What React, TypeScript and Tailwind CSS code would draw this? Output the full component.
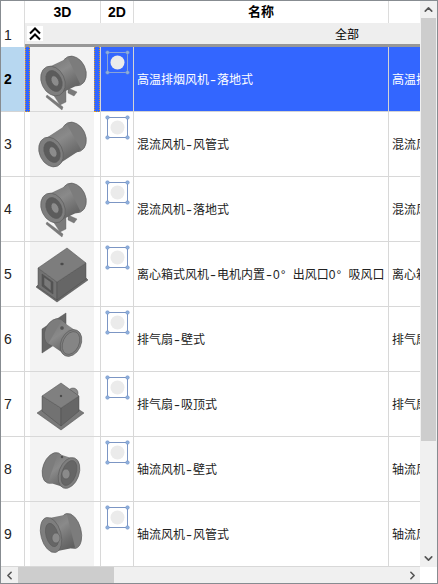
import React from "react";
import { ChevronUp, ChevronDown, ChevronLeft, ChevronRight } from "lucide-react";

const cjk = "font-['Liberation_Sans','Noto_Sans_CJK_SC',sans-serif]";

interface CylProps {
    id: string;
    fx: number;
    fy: number;
    bx: number;
    by: number;
    rx?: number;
    ry?: number;
    rot?: number;
    children?: React.ReactNode;
}

// tilted drum: rear flange, shaded body, front flange
const Cyl: React.FC<CylProps> = ({ id, fx, fy, bx, by, rx = 10, ry = 14, rot = -25, children }) => {
    const a = (rot * Math.PI) / 180;
    const ax = bx - fx;
    const ay = by - fy;
    const ux = ax * Math.cos(a) + ay * Math.sin(a);
    const uy = -ax * Math.sin(a) + ay * Math.cos(a);
    const t = Math.atan2(-ry * ux, rx * uy);
    const lx = rx * Math.cos(t);
    const ly = ry * Math.sin(t);
    const dx = lx * Math.cos(a) - ly * Math.sin(a);
    const dy = lx * Math.sin(a) + ly * Math.cos(a);
    return (
        <g stroke="#5a5a5a" strokeWidth="0.6">
            <ellipse
                cx={bx}
                cy={by}
                rx={rx + 1}
                ry={ry + 1}
                transform={`rotate(${rot} ${bx} ${by})`}
                fill="#7c7c7c"
            />
            <polygon
                points={`${fx + dx},${fy + dy} ${bx + dx},${by + dy} ${bx - dx},${by - dy} ${fx - dx},${fy - dy}`}
                fill={`url(#${id})`}
                stroke="none"
            />
            <ellipse
                cx={fx}
                cy={fy}
                rx={rx + 1}
                ry={ry + 1}
                transform={`rotate(${rot} ${fx} ${fy})`}
                fill="#7e7e7e"
            />
            {children}
        </g>
    );
};

const Grad: React.FC<{ id: string }> = ({ id }) => (
    <defs>
        <linearGradient id={id} x1="0.15" y1="0" x2="0.75" y2="1">
            <stop offset="0" stopColor="#777" />
            <stop offset="0.4" stopColor="#8a8a8a" />
            <stop offset="0.75" stopColor="#6e6e6e" />
            <stop offset="1" stopColor="#5e5e5e" />
        </linearGradient>
    </defs>
);

const Duct: React.FC<{ id: string; dy?: number; feet?: boolean }> = ({ id, dy = 0, feet }) => {
    const cx = feet ? 23 : 21;
    const cy = feet ? 31 : 40;
    return (
        <svg width="64" height="64" viewBox="0 0 64 64" className="block">
            <Grad id={id} />
            <g transform={`translate(0 ${dy})`}>
                {feet && (
                    <g fill="#7a7a7a" stroke="#666" strokeWidth="0.4">
                        <polygon points="38,38 47,42 44,46 38,43" />
                        <polygon points="21,41 36,36 36,52 30,55" />
                        <polygon points="17,45 33,57 32,60 16,47" />
                    </g>
                )}
                <Cyl id={id} fx={cx} fy={cy} bx={44} by={feet ? 21 : 25} rx={10.5} ry={14.5}>
                    <ellipse
                        cx={cx + 1}
                        cy={cy}
                        rx="7.5"
                        ry="11"
                        transform={`rotate(-25 ${cx + 1} ${cy})`}
                        fill="#5c5c5c"
                    />
                    <ellipse
                        cx={cx + 2}
                        cy={cy}
                        rx="3.5"
                        ry="5.5"
                        transform={`rotate(-25 ${cx + 2} ${cy})`}
                        fill="#8c8c8c"
                    />
                </Cyl>
            </g>
        </svg>
    );
};

const BoxFan: React.FC = () => (
    <svg width="64" height="64" viewBox="0 0 64 64" className="block">
        <g stroke="#4c4c4c" strokeWidth="0.5">
            <polygon points="6,45 27,60 58,38 56,36 27,55 8,43" fill="#6a6a6a" />
            <polygon points="8,26 27,40 27,58 8,45" fill="#727272" />
            <polygon points="27,40 56,21 56,37 27,58" fill="#666" />
            <polygon points="37,6 56,21 27,40 8,26" fill="#7d7d7d" />
            <polygon points="12,32 23,40 23,52 12,44" fill="#555" />
            <polygon points="14,35 21,40 21,49 14,43" fill="#7a7a7a" />
            <ellipse cx="32" cy="22" rx="1.5" ry="1" fill="#444" />
        </g>
    </svg>
);

const WallFan: React.FC<{ id: string }> = ({ id }) => (
    <svg width="64" height="64" viewBox="0 0 64 64" className="block">
        <Grad id={id} />
        <polygon points="36,6 12,22 12,46 36,30" fill="#666" stroke="#4c4c4c" strokeWidth="0.5" />
        <Cyl id={id} fx={41} fy={36} bx={25} by={25} rx={9} ry={13} rot={25}>
            <ellipse cx="41" cy="36" rx="8" ry="12" transform="rotate(25 41 36)" fill="#858585" />
            <circle cx="32" cy="21" r="1.6" fill="#555" />
        </Cyl>
    </svg>
);

const RoofFan: React.FC = () => (
    <svg width="64" height="64" viewBox="0 0 64 64" className="block">
        <g stroke="#4c4c4c" strokeWidth="0.5">
            <circle cx="43" cy="21" r="5" fill="#888" />
            <polygon points="7,41 31,58 54,41 48,37 31,50 13,37" fill="#7a7a7a" />
            <polygon points="12,24 31,36 31,54 12,39" fill="#727272" />
            <polygon points="31,36 49,24 49,39 31,54" fill="#666" />
            <polygon points="31,11 49,24 31,36 12,24" fill="#808080" />
            <circle cx="31" cy="24" r="0.9" fill="#333" />
        </g>
    </svg>
);

const AxialWall: React.FC<{ id: string }> = ({ id }) => (
    <svg width="64" height="64" viewBox="0 0 64 64" className="block">
        <Grad id={id} />
        <Cyl id={id} fx={39} fy={36} bx={23} by={31} rx={9} ry={15} rot={20}>
            <ellipse cx="39" cy="36" rx="7" ry="13" transform="rotate(20 39 36)" fill="#666" />
            <ellipse cx="36" cy="37" rx="4" ry="5" fill="#8a8a8a" />
            <circle cx="32" cy="20" r="1" fill="#333" />
        </Cyl>
    </svg>
);

const AxialDuct: React.FC<{ id: string }> = ({ id }) => (
    <svg width="64" height="64" viewBox="0 0 64 64" className="block">
        <Grad id={id} />
        <Cyl id={id} fx={21} fy={33} bx={41} by={29} rx={9} ry={17} rot={-15}>
            <ellipse cx="22" cy="33" rx="6" ry="12" transform="rotate(-15 22 33)" fill="#666" />
            <ellipse cx="26" cy="36" rx="4" ry="5" fill="#8a8a8a" />
        </Cyl>
    </svg>
);

const Symbol2D: React.FC<{ selected?: boolean }> = ({ selected }) => (
    <svg width="32" height="32" viewBox="0 0 32 32" className="block">
        <rect x="6.5" y="5.5" width="20" height="20" fill="none" stroke={selected ? "#8aa4d8" : "#7c96c4"} />
        <circle cx="16.5" cy="15.5" r="7" fill="#ebebeb" />
        {[
            [6.5, 5.5],
            [26.5, 5.5],
            [6.5, 25.5],
            [26.5, 25.5],
        ].map(([x, y]) => (
            <circle key={`${x}-${y}`} cx={x} cy={y} r="1.8" fill="#8fb0dc" stroke="#6f8fc4" strokeWidth="0.5" />
        ))}
    </svg>
);

// hyphen and degree sign take wider slots than the latin font gives them
const Name: React.FC<{ text: string }> = ({ text }) => (
    <>
        {text.split(/([-°])/).map((part, i) =>
            part === "-" ? (
                <span key={i} className="inline-block w-2 text-center scale-x-150">
                    -
                </span>
            ) : part === "°" ? (
                <span key={i} className="inline-block w-[13px] pl-px">
                    °
                </span>
            ) : (
                <span key={i}>{part}</span>
            ),
        )}
    </>
);

const rows = [
    { n: 2, name: "高温排烟风机-落地式", icon: <Duct id="f2" dy={3} feet /> },
    { n: 3, name: "混流风机-风管式", icon: <Duct id="f3" /> },
    { n: 4, name: "混流风机-落地式", icon: <Duct id="f4" feet /> },
    { n: 5, name: "离心箱式风机-电机内置-0°出风口0°吸风口", icon: <BoxFan /> },
    { n: 6, name: "排气扇-壁式", icon: <WallFan id="f6" /> },
    { n: 7, name: "排气扇-吸顶式", icon: <RoofFan /> },
    { n: 8, name: "轴流风机-壁式", icon: <AxialWall id="f8" /> },
    { n: 9, name: "轴流风机-风管式", icon: <AxialDuct id="f9" /> },
];

const Row: React.FC<{ n: number; name: string; icon: React.ReactNode }> = ({ n, name, icon }) => {
    const selected = n === 2;
    const line = selected ? "border-[#d4d4d4]" : "border-[#d8d8d8]";
    const strip = selected
        ? "bg-[#3366ff] border-x border-b border-dotted border-[#e8a010]"
        : "border-b border-[#d8d8d8]";
    return (
        <div className={`flex h-[65px] shrink-0 ${selected ? "text-white" : "text-[#222]"}`}>
            <div
                className={`w-6 shrink-0 flex items-center pl-[3px] pt-px text-[14px] border-r border-b ${line} ${
                    selected ? "bg-[#b7d7f0] text-black font-bold" : ""
                }`}
            >
                {n}
            </div>
            <div className="w-[76px] shrink-0 flex border-r border-[#d8d8d8]">
                <div className={`w-[5px] shrink-0 ${strip}`} />
                <div className="w-16 h-[65px] shrink-0 bg-[#f3f3f3] border-b border-[#d8d8d8]">{icon}</div>
                <div className={`w-[6px] shrink-0 ${strip}`} />
            </div>
            <div className={`w-[33px] shrink-0 border-r border-b ${line} ${selected ? "bg-[#3366ff]" : ""}`}>
                <Symbol2D selected={selected} />
            </div>
            <div
                className={`w-[255px] shrink-0 flex items-center pl-[3px] pt-px whitespace-nowrap overflow-hidden text-[12px] border-r border-b ${line} ${
                    selected ? "bg-[#3366ff]" : ""
                }`}
            >
                <div>
                    <Name text={name} />
                </div>
            </div>
            <div
                className={`w-8 shrink-0 flex items-center pl-[3px] pt-px whitespace-nowrap overflow-hidden text-[12px] border-b ${line} ${
                    selected ? "bg-[#3366ff]" : ""
                }`}
            >
                <div>
                    <Name text={name} />
                </div>
            </div>
        </div>
    );
};

export default function App() {
    return (
        <div className={`w-[438px] h-[584px] border border-[#878c91] bg-white flex flex-col overflow-hidden ${cjk}`}>
            <div className="flex flex-1 min-h-0">
                <div className="w-[419px] shrink-0 flex flex-col overflow-hidden">
                    {/* column titles */}
                    <div className="flex h-[22px] shrink-0 text-[14px] text-black font-bold">
                        <div className="w-6 shrink-0 border-r border-[#dcdcdc]" />
                        <div className="w-[76px] shrink-0 flex items-center justify-center border-r border-[#dcdcdc]">
                            3D
                        </div>
                        <div className="w-[33px] shrink-0 flex items-center justify-center border-r border-[#dcdcdc]">
                            2D
                        </div>
                        <div className="w-[255px] shrink-0 flex items-center justify-center border-r border-[#dcdcdc] text-[13px]">
                            名称
                        </div>
                    </div>
                    {/* filter row */}
                    <div className="flex h-6 shrink-0">
                        <div className="w-6 shrink-0 flex items-center pl-[3px] pt-px text-[14px] text-[#222] border-r border-[#dcdcdc]">
                            1
                        </div>
                        <div className="flex-1 flex items-start bg-[#eeeeee] border-b-[3px] border-[#979797]">
                            <div className="ml-[2px] mt-[3px] w-4 h-[15px] bg-white flex items-center justify-center">
                                <svg width="12" height="14" viewBox="0 0 12 14" fill="none" stroke="black" strokeWidth="2">
                                    <polyline points="1,6.5 6,1.5 11,6.5" />
                                    <polyline points="1,12.5 6,7.5 11,12.5" />
                                </svg>
                            </div>
                            <span className="ml-[292px] mt-[5px] text-[12px] leading-[14px] text-black">全部</span>
                        </div>
                    </div>
                    {rows.map((r) => (
                        <Row key={r.n} {...r} />
                    ))}
                </div>
                {/* vertical scrollbar */}
                <div className="w-[17px] shrink-0 flex flex-col bg-[#f0f0f0]">
                    <div className="h-[17px] shrink-0 flex items-center justify-center">
                        <ChevronUp size={13} strokeWidth={3} className="text-[#555]" />
                    </div>
                    <div className="h-[423px] shrink-0 mx-px bg-[#cdcdcd]" />
                    <div className="flex-1 flex items-end justify-center pb-[2px]">
                        <ChevronDown size={13} strokeWidth={3} className="text-[#555]" />
                    </div>
                </div>
            </div>
            {/* horizontal scrollbar */}
            <div className="h-4 shrink-0 flex">
                <div className="w-[419px] shrink-0 flex items-center bg-[#f0f0f0]">
                    <div className="w-[17px] shrink-0 flex justify-center">
                        <ChevronLeft size={13} strokeWidth={3} className="text-[#555]" />
                    </div>
                    <div className="w-24 h-4 shrink-0 bg-[#cdcdcd]" />
                    <div className="flex-1 flex justify-end pr-[1px]">
                        <ChevronRight size={13} strokeWidth={3} className="text-[#555]" />
                    </div>
                </div>
            </div>
        </div>
    );
}
